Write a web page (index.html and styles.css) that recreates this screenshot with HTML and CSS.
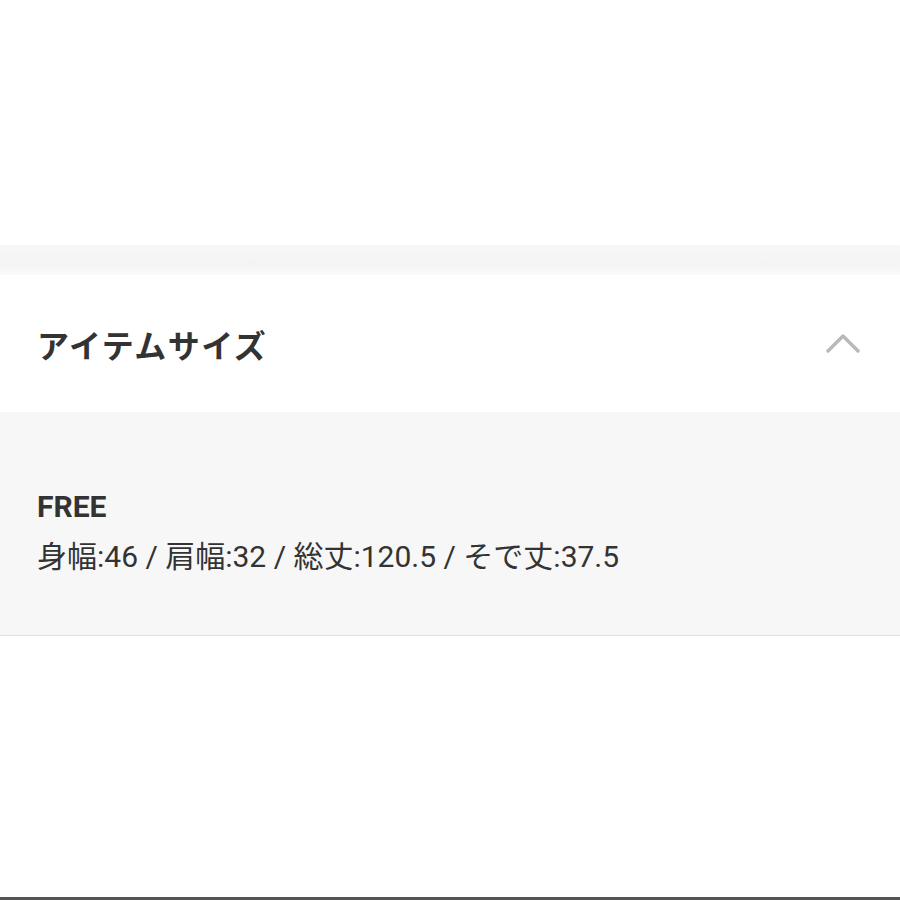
FILE: index.html
```html
<!DOCTYPE html>
<html lang="ja">
    <head>
        <meta charset="utf-8">
        <title>アイテムサイズ</title>
        <link rel="stylesheet" href="styles.css">
    </head>
    <body>
        <div class="top-space"></div>
        <div class="band"></div>
        <div class="accordion-head">
            <h2>アイテムサイズ</h2>
            <svg class="chevron" width="36" height="24" viewBox="0 0 36 24">
                <polyline points="2,19 17,4 32,19" fill="none" stroke="#b9b9b9" stroke-width="3.5" stroke-linecap="round" stroke-linejoin="round" />
            </svg>
        </div>
        <div class="accordion-body">
            <p class="size-name">FREE</p>
            <p class="size-detail">身幅:46 / 肩幅:32 / 総丈:120.5 / そで丈:37.5</p>
        </div>
        <div class="bottom-line"></div>
    </body>
</html>
```

FILE: styles.css
```css
html, body {
    margin: 0;
    padding: 0;
}
body {
    background: #FFF;
    color: #333;
    font-family: Roboto, "Noto Sans CJK JP", sans-serif;
    display: flex;
    flex-direction: column;
    min-height: 900px;
}
.top-space {
    height: 245px;
}
.band {
    height: 30px;
    background: linear-gradient(#f7f7f7, #f4f4f4 60%, #fafafa);
}
.accordion-head {
    height: 137px;
    padding: 0 38px 0 37px;
    display: flex;
    align-items: center;
    justify-content: space-between;
}
.accordion-head h2 {
    margin: 0;
    font-size: 32px;
    font-weight: bold;
    letter-spacing: 1.5px;
}
.chevron {
    display: block;
}
.accordion-body {
    background: #f7f7f7;
    border-bottom: 1px solid #e2e2e2;
    padding: 70px 37px 53px;
}
.accordion-body p {
    margin: 0;
    line-height: 50px;
}
.size-name {
    font-size: 30px;
    font-weight: bold;
}
.size-detail {
    font-size: 30px;
}
.bottom-line {
    margin-top: auto;
    height: 3px;
    background: #555;
}
```
